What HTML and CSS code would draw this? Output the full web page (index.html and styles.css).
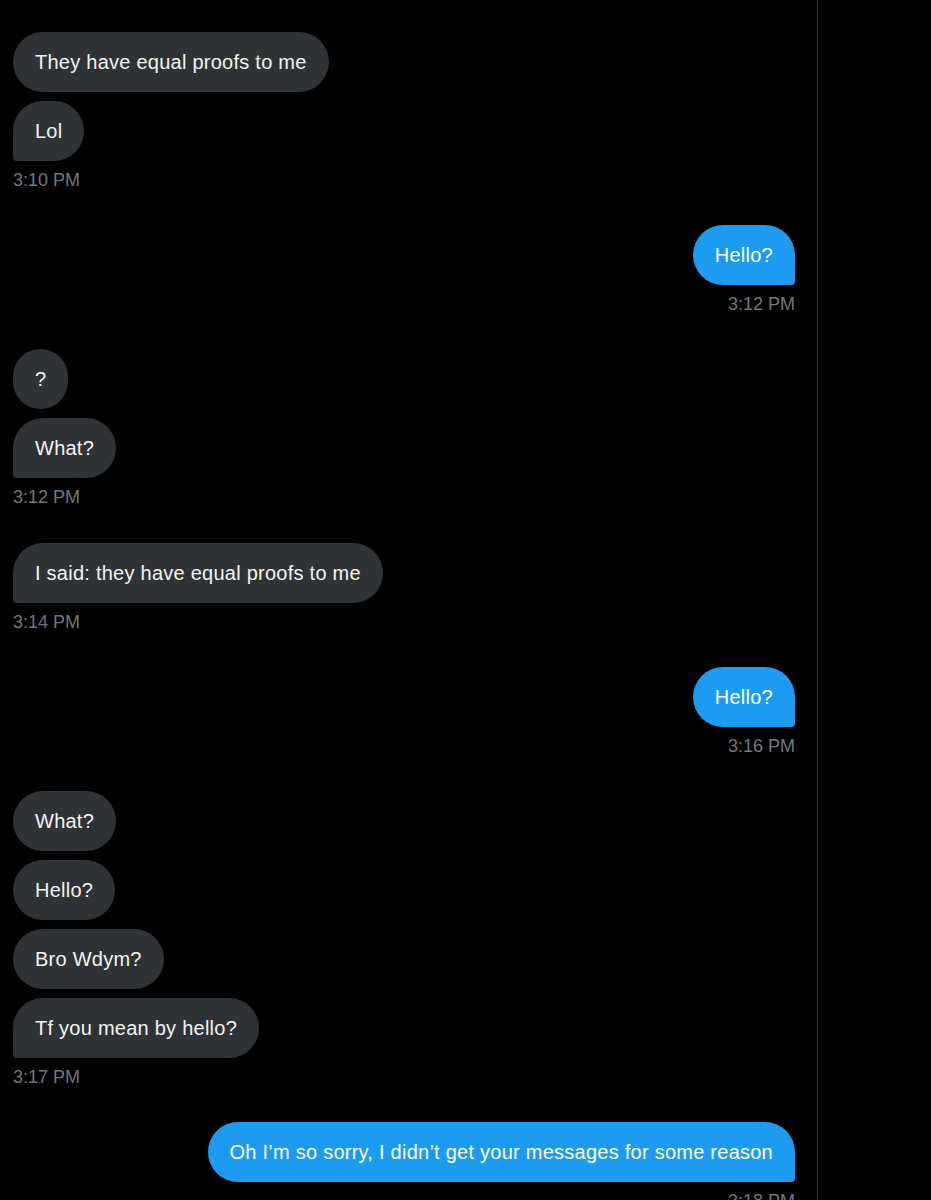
FILE: index.html
```html
<!DOCTYPE html>
<html lang="en">
<head>
    <meta charset="UTF-8">
    <meta name="viewport" content="width=device-width, initial-scale=1.0">
    <title>Messages</title>
    <link rel="stylesheet" href="styles.css">
</head>
<body>
    <div class="layout">
        <main class="thread">
            <div class="group received">
                <div class="bubble">They have equal proofs to me</div>
                <div class="bubble last">Lol</div>
                <div class="time">3:10 PM</div>
            </div>

            <div class="group sent">
                <div class="bubble last">Hello?</div>
                <div class="time">3:12 PM</div>
            </div>

            <div class="group received">
                <div class="bubble">?</div>
                <div class="bubble last">What?</div>
                <div class="time">3:12 PM</div>
            </div>

            <div class="group received">
                <div class="bubble last">I said: they have equal proofs to me</div>
                <div class="time">3:14 PM</div>
            </div>

            <div class="group sent">
                <div class="bubble last">Hello?</div>
                <div class="time">3:16 PM</div>
            </div>

            <div class="group received">
                <div class="bubble">What?</div>
                <div class="bubble">Hello?</div>
                <div class="bubble">Bro Wdym?</div>
                <div class="bubble last">Tf you mean by hello?</div>
                <div class="time">3:17 PM</div>
            </div>

            <div class="group sent">
                <div class="bubble last">Oh I’m so sorry, I didn’t get your messages for some reason</div>
                <div class="time">3:18 PM</div>
            </div>
        </main>
        <aside class="side"></aside>
    </div>
</body>
</html>
```

FILE: styles.css
```css
body {
    margin: 0;
    background-color: #000;
    font-family: "Liberation Sans", Arial, sans-serif;
    color: #e7e9ea;
    overflow: hidden;
}
.layout {
    display: flex;
    height: 1200px;
}
.thread {
    width: 818px;
    padding: 32px 22px 0 13px;
    box-sizing: border-box;
    border-right: 1px solid #333639;
    display: flex;
    flex-direction: column;
    gap: 35.2px;
}
.side {
    flex: 1;
}
.group {
    display: flex;
    flex-direction: column;
    gap: 9px;
}
.group.received {
    align-items: flex-start;
}
.group.sent {
    align-items: flex-end;
}
.bubble {
    padding: 18px 22px;
    font-size: 20px;
    line-height: 24px;
    letter-spacing: 0.25px;
    border-radius: 30px;
    background-color: #2f3336;
    color: #f2f2f2;
    white-space: nowrap;
}
.sent .bubble {
    background-color: #1d9bf0;
    color: #fff;
}
.received .bubble.last {
    border-bottom-left-radius: 4px;
}
.sent .bubble.last {
    border-bottom-right-radius: 4px;
}
.time {
    font-size: 18px;
    line-height: 20px;
    color: #71767b;
}
```
